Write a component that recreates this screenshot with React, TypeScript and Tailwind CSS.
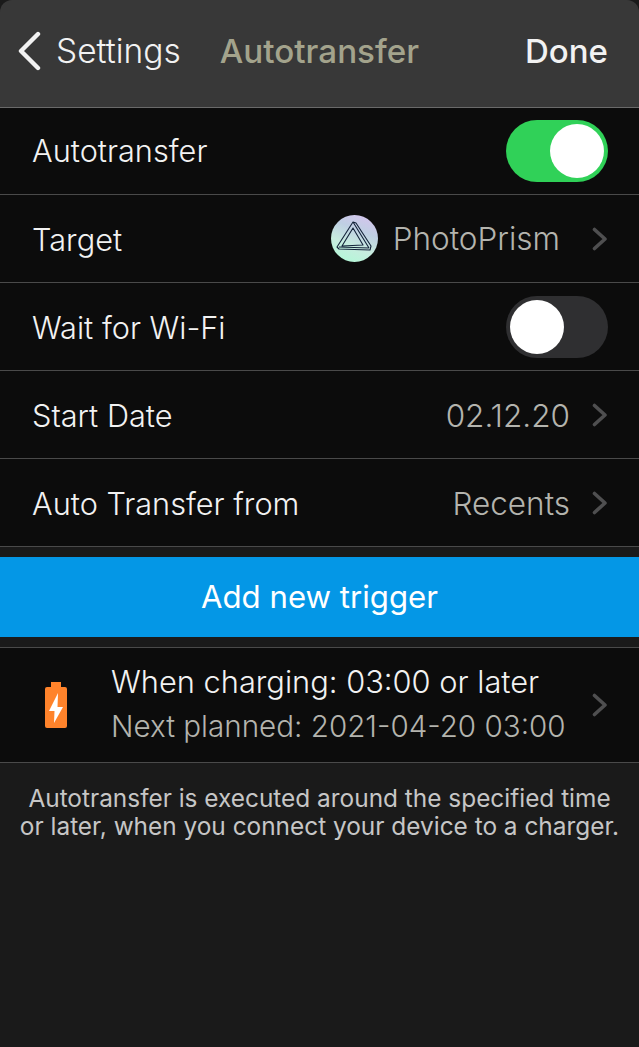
import React from 'react';

function Chevron() {
  return (
    <svg width="16" height="24" viewBox="0 0 16 24" fill="none" className="shrink-0">
      <path d="M2.5 2.5 L13 12 L2.5 21.5" stroke="#4f4f50" strokeWidth="3.6" strokeLinecap="round" strokeLinejoin="round" />
    </svg>
  );
}

function Toggle({ on }: { on: boolean }) {
  return (
    <div className={`w-[102px] h-[62px] rounded-full flex items-center px-[4px] ${on ? 'bg-[#30d158] justify-end' : 'bg-[#2f2f31] justify-start'}`}>
      <div className="w-[54px] h-[54px] rounded-full bg-white" />
    </div>
  );
}

function Row({ label, first, children }: { label: string; first?: boolean; children?: React.ReactNode }) {
  return (
    <div className={`${first ? 'h-[87px]' : 'h-[88px]'} border-b border-[#4a4a4a] bg-[#0c0c0c] flex items-center justify-between pl-[32px] pr-[31px]`}>
      <span className={`text-[30.7px] font-light text-[#f2f2f2] ${first ? '' : 'mt-[4px]'}`}>{label}</span>
      {children}
    </div>
  );
}

function Value({ text }: { text: string }) {
  return (
    <div className="flex items-center gap-[22px]">
      <span className="text-[31.5px] font-light text-[#b4b4ae] mt-[2px]">{text}</span>
      <Chevron />
    </div>
  );
}

export default function App() {
  return (
    <div className="w-[639px] h-[1047px] bg-[#1a1a1a] overflow-hidden font-['Inter',sans-serif]">
      <header className="h-[108px] bg-[#383838] rounded-t-[12px] border-b border-[#6a6a6a] flex items-start pt-[31px] pl-[17px] pr-[31px]">
        <svg width="24" height="40" viewBox="0 0 24 40" fill="none" className="shrink-0">
          <path d="M21 3 L4 20 L21 37" stroke="#f2f2f2" strokeWidth="4.4" strokeLinecap="round" strokeLinejoin="round" />
        </svg>
        <span className="ml-[15px] text-[33.5px] leading-[40px] font-light text-[#f2f2f2]">Settings</span>
        <span className="ml-[39px] text-[33.2px] leading-[40px] font-medium text-[#a3a38c]">Autotransfer</span>
        <span className="ml-auto text-[33px] leading-[40px] font-medium text-[#f2f2f2]">Done</span>
      </header>

      <Row label="Autotransfer" first><Toggle on /></Row>
      <Row label="Target">
        <div className="flex items-center">
          <svg width="47" height="47" viewBox="0 0 47 47" fill="none" className="mr-[15px]">
            <defs>
              <linearGradient id="prism" x1="14" y1="46" x2="32" y2="1" gradientUnits="userSpaceOnUse">
                <stop offset="0" stopColor="#b4f7d8" />
                <stop offset="0.35" stopColor="#c8ecdf" />
                <stop offset="0.7" stopColor="#bfcfe3" />
                <stop offset="1" stopColor="#d2c6ec" />
              </linearGradient>
            </defs>
            <circle cx="23.5" cy="23.5" r="23.5" fill="url(#prism)" />
            <path d="M22 7 L6 32 L8 34 L39 35 L40 31 L25 8 Z M22 7 L38 33 M8 32 L38 33 M11 31 L22 13 L32 30 Z" stroke="#14233a" strokeWidth="1.1" strokeLinejoin="round" />
          </svg>
          <span className="text-[31.5px] font-light text-[#b4b4ae] mr-[32px]">PhotoPrism</span>
          <Chevron />
        </div>
      </Row>
      <Row label="Wait for Wi-Fi"><Toggle on={false} /></Row>
      <Row label="Start Date"><Value text="02.12.20" /></Row>
      <Row label="Auto Transfer from"><Value text="Recents" /></Row>

      <button className="block mt-[10px] w-full h-[80px] bg-[#0497e6] text-white text-[31.2px] font-normal">Add new trigger</button>

      <div className="mt-[10px] h-[116px] border-y border-[#4a4a4a] bg-[#0c0c0c] flex items-center pl-[45px] pr-[31px]">
        <svg width="22" height="46" viewBox="0 0 22 46" className="shrink-0">
          <path d="M6 0 H16 V5 H20 A2 2 0 0 1 22 7 V44 A2 2 0 0 1 20 46 H2 A2 2 0 0 1 0 44 V7 A2 2 0 0 1 2 5 H6 Z" fill="#ff832b" />
          <path d="M13 11 L4 29 H9.5 L9 41 L18 25 H12.5 Z" fill="#ffffff" />
        </svg>
        <div className="ml-[44px] flex-1 -mt-[2px]">
          <div className="text-[30.8px] leading-[44px] font-light text-[#f2f2f2]">When charging: 03:00 or later</div>
          <div className="text-[29.6px] leading-[44px] font-light text-[#b4b4ae] whitespace-nowrap">Next planned: 2021-04-20 03:00</div>
        </div>
        <Chevron />
      </div>

      <p className="mt-[21px] text-center text-[24.4px] leading-[28px] text-[#c6c6c6] whitespace-nowrap">
        Autotransfer is executed around the specified time
        <br />
        or later, when you connect your device to a charger.
      </p>
    </div>
  );
}
